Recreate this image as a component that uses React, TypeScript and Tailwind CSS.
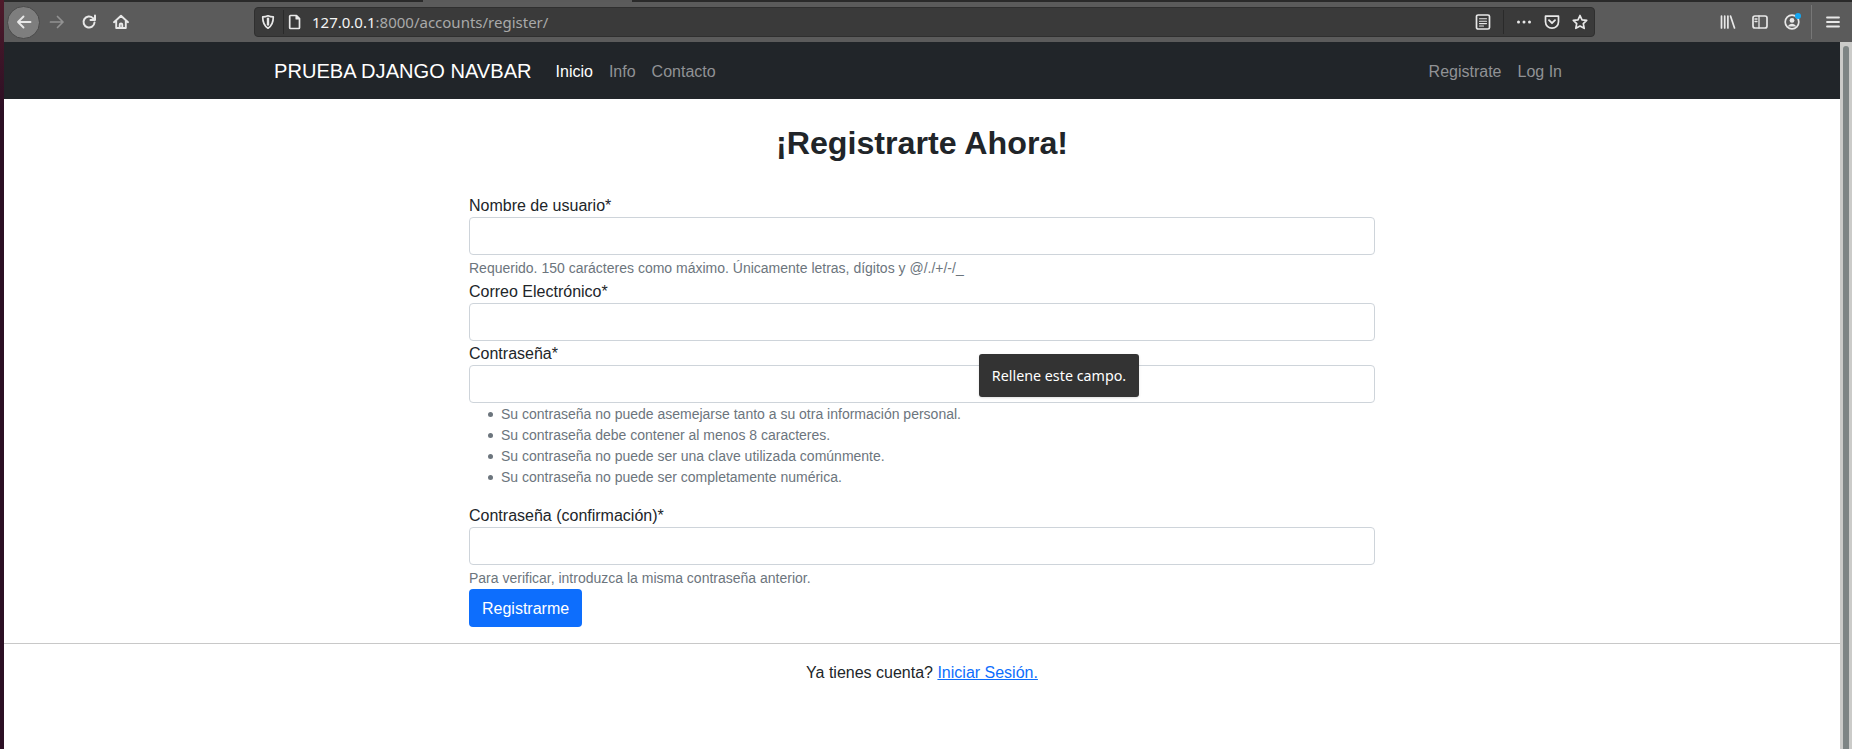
import React from "react";

function Ic({ className, children }: { className?: string; children: React.ReactNode }) {
  return (
    <svg viewBox="0 0 16 16" fill="none" stroke="currentColor" strokeWidth={1.7} strokeLinecap="round" strokeLinejoin="round" className={"h-4 w-4 shrink-0 " + (className ?? "")}>
      {children}
    </svg>
  );
}

function Field({ label, help, children }: { label: string; help?: string; children?: React.ReactNode }) {
  return (
    <div className="relative">
      <label className="block h-6 text-base leading-[26px] text-[#212529]">{label}</label>
      <div className="h-[38px] rounded-[4px] border border-[#ced4da] bg-white" />
      {help && <div className="mt-[3px] text-sm leading-[21px] text-[#6c757d]">{help}</div>}
      {children}
    </div>
  );
}

export default function App() {
  return (
    <div className="flex h-[749px] w-full overflow-hidden bg-white font-['Liberation_Sans',Arial,sans-serif]">
      <div className="h-full w-1 shrink-0 bg-gradient-to-b from-[#4f1a2a] to-[#2c0f24] to-[15%]" />
      <div className="flex min-w-0 flex-1 flex-col">
        {/* tab strip */}
        <div className="flex h-[2px] shrink-0 bg-[#5a5a5a]">
          <div className="w-[419px] bg-[#2a2a2a]" />
          <div className="w-[209px]" />
          <div className="flex-1 bg-[#2a2a2a]" />
        </div>
        {/* toolbar */}
        <div className="flex h-10 shrink-0 items-center bg-[#5b5b5b] text-[#e8e8e8]">
          <div className="ml-[3px] flex h-[33px] w-[33px] items-center justify-center rounded-full border border-[#4a4a4a] bg-[#7e7e7e]">
            <Ic><path d="M14.500 8H2M7.500 2.500 2 8l5.500 5.500" strokeWidth={1.9} /></Ic>
          </div>
          <Ic className="ml-[9px] text-[#929292]"><path d="M1.500 8H14M8.500 2.500 14 8l-5.500 5.500" /></Ic>
          <Ic className="ml-4"><path d="M13.500 8.500a5.500 5.500 0 1 1-1.600-4.400L14 6M14 1.500V6H9.500" strokeWidth={2} /></Ic>
          <Ic className="ml-4"><path d="M1 8.200 8 1.800l7 6.400M3.200 7v7h9.600V7M6.700 14v-3.200a1.300 1.300 0 0 1 2.600 0V14" strokeWidth={1.9} /></Ic>
          <div className="ml-[125px] flex h-[30px] w-[1341px] shrink-0 items-center rounded-[4px] border border-[#2f2f2f] bg-[#3a3a3a]">
            <Ic className="ml-[5px]"><path d="M8 1.800c2 .9 3.600 1.100 5.300 1.100 0 5-1.300 8.800-5.300 11.300C4 11.700 2.700 7.900 2.700 2.900 4.400 2.900 6 2.700 8 1.800Z" /><path d="M8 4.600v6" strokeWidth={2.400} /></Ic>
            <div className="ml-[7px] h-6 w-px bg-[#2a2a2a]" />
            <Ic className="ml-[3px]"><path d="M3.500 1.500h6l3 3v9.200a.8.8 0 0 1-.8.8H3.500a.8.8 0 0 1-.8-.8V2.300a.8.8 0 0 1 .8-.8ZM9.300 1.500v3.200h3.200" /></Ic>
            <div className="ml-[9px] flex-1 font-['Noto_Sans',sans-serif] text-[15px] leading-none text-[#a9a9a9]">
              <span className="text-[#f4f4f4]">127.0.0.1</span>:8000/accounts/register/
            </div>
            <div className="mr-[6px] flex items-center gap-3">
              <Ic><rect x="1.500" y="1" width="13" height="14" rx="1.600" /><path d="M4.500 4.800h7M4.500 7.200h7M4.500 9.600h7M4.500 12h4" strokeWidth={1.1} /></Ic>
              <div className="h-6 w-px bg-[#2a2a2a]" />
              <Ic><circle cx="2.500" cy="8" r="1.500" fill="currentColor" stroke="none" /><circle cx="8" cy="8" r="1.500" fill="currentColor" stroke="none" /><circle cx="13.500" cy="8" r="1.500" fill="currentColor" stroke="none" /></Ic>
              <Ic><path d="M1.500 2.200h13v5.500a6.500 6.500 0 0 1-13 0V2.200Z" /><path d="m5 6.200 3 3 3-3" strokeWidth={1.900} /></Ic>
              <Ic><path d="m8 1.500 2 4.300 4.700.6-3.400 3.200.9 4.700L8 12l-4.200 2.300.9-4.700L1.300 6.400 6 5.800 8 1.500Z" /></Ic>
            </div>
          </div>
          <Ic className="ml-[125px]"><path d="M1.500 2v12M4.700 2v12M7.900 2v12M10.500 2l4 12" /></Ic>
          <Ic className="ml-4"><rect x="1" y="2" width="14" height="12" rx="2" /><path d="M7 2v12M3 5h2M3 7.500h2" strokeWidth={1.300} /></Ic>
          <div className="relative ml-4 h-4 w-4 shrink-0">
            <Ic><circle cx="8" cy="8" r="6.800" /><circle cx="8" cy="6.400" r="2.400" fill="currentColor" stroke="none" /><path d="M3.800 12.600c1-2 2.400-2.800 4.200-2.800s3.200.8 4.200 2.800" fill="currentColor" stroke="none" /></Ic>
            <div className="absolute -right-[1px] -top-[1.500px] h-[6px] w-[6px] rounded-full bg-[#14a6f2]" />
          </div>
          <div className="ml-[11px] h-[34px] w-px bg-[#777777]" />
          <Ic className="ml-[13px]"><path d="M2 3.500h12M2 8h12M2 12.500h12" strokeWidth={1.800} /></Ic>
        </div>
        <div className="flex min-h-0 flex-1">
          <div className="min-w-0 flex-1">
            {/* navbar */}
            <nav className="h-[57px] bg-[#212529]">
              <div className="mx-auto flex h-full w-[1320px] items-center px-3 pt-[2px] text-base text-[#909295]">
                <span className="mr-4 text-[20.1px] text-white">PRUEBA DJANGO NAVBAR</span>
                <span className="px-2 text-white">Inicio</span>
                <span className="px-2">Info</span>
                <span className="px-2">Contacto</span>
                <span className="ml-auto px-2">Registrate</span>
                <span className="px-2">Log In</span>
              </div>
            </nav>
            <h1 className="mb-8 mt-6 h-[38px] pt-px text-center text-[32.2px] font-bold leading-[38px] text-[#212529]">¡Registrarte Ahora!</h1>
            <form className="mx-auto w-[906px]">
              <Field label="Nombre de usuario*" help="Requerido. 150 carácteres como máximo. Únicamente letras, dígitos y @/./+/-/_" />
              <Field label="Correo Electrónico*" />
              <Field label="Contraseña*">
                <div className="absolute left-[510px] top-[13px] flex h-[43px] w-[160px] items-center justify-center rounded-[3px] bg-[#333333] font-['Noto_Sans',sans-serif] text-[14.3px] text-white shadow-sm">
                  Rellene este campo.
                </div>
              </Field>
              <ul className="mb-[15px] mt-px list-none pl-0 text-sm leading-[21px] text-[#6c757d]">
                {[
                  "Su contraseña no puede asemejarse tanto a su otra información personal.",
                  "Su contraseña debe contener al menos 8 caracteres.",
                  "Su contraseña no puede ser una clave utilizada comúnmente.",
                  "Su contraseña no puede ser completamente numérica.",
                ].map((t) => (
                  <li key={t} className="flex items-center pl-[19px]">
                    <span className="mr-2 h-[5px] w-[5px] rounded-full bg-[#6c757d]" />
                    {t}
                  </li>
                ))}
              </ul>
              <Field label="Contraseña (confirmación)*" help="Para verificar, introduzca la misma contraseña anterior." />
              <button type="button" className="block h-[38px] rounded-[4px] bg-[#0d6efd] px-[13px] pt-px text-base text-white">Registrarme</button>
            </form>
            <hr className="mt-4 border-t border-[#c8c8c8]" />
            <p className="mt-[17px] text-center text-base leading-6 text-[#212529]">
              Ya tienes cuenta? <a href="#" className="text-[#0d6efd] underline">Iniciar Sesión.</a>
            </p>
          </div>
          {/* scrollbar */}
          <div className="flex w-3 shrink-0 justify-center bg-[#cbcbc9] pt-[4px]">
            <div className="h-full w-[6px] rounded-t-[3px] bg-[#7e8585]" />
          </div>
        </div>
      </div>
    </div>
  );
}
